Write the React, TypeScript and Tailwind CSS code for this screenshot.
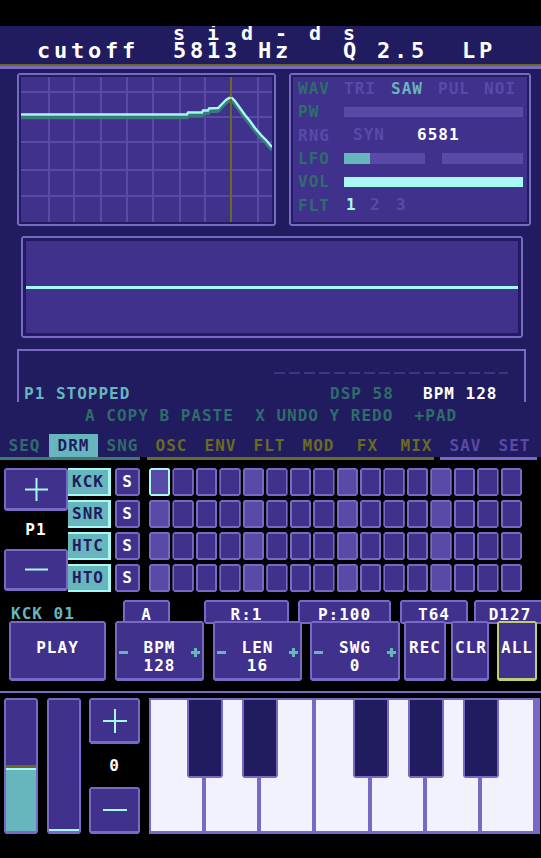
import React from "react";

const NOTCH =
  "[clip-path:polygon(2px_0,calc(100%-2px)_0,100%_2px,100%_calc(100%-2px),calc(100%-2px)_100%,2px_100%,0_calc(100%-2px),0_2px)]";

const SMALL = "text-[16px] tracking-[1px] leading-[16px] whitespace-pre";

function FilterGraph() {
  const vLines = [27, 52, 79, 105, 131, 158, 183, 236];
  const hLines = [14, 39, 64, 92, 118];
  const pts =
    "0,37.5 166,37.5 167,35.5 181,35.5 182,33.5 187,33.5 188,31.5 197,31 201,27 205,23 208,21 211,21 214,24 219,31 224,38 229,44 234,51 240,58 245,63 251,70";
  const shadow =
    "0,40.5 166,40.5 167,38.5 181,38.5 182,36.5 187,36.5 188,34.5 197,34 201,30 205,26 208,24 211,24 214,27 219,34 224,41 229,47 234,54 240,61 245,66 251,73";
  return (
    <svg width="251" height="145" viewBox="0 0 251 145" className="block">
      {vLines.map((x) => (
        <rect key={"v" + x} x={x} y={0} width={2} height={145} fill="#5a4aa8" />
      ))}
      {hLines.map((y) => (
        <rect key={"h" + y} x={0} y={y} width={251} height={2} fill="#5a4aa8" />
      ))}
      <polyline points={shadow} fill="none" stroke="#3a7a78" strokeWidth={3.6} strokeLinejoin="miter" />
      <polyline points={pts} fill="none" stroke="#a8f8f4" strokeWidth={2.4} strokeLinejoin="miter" />
      <rect x={209} y={0} width={2} height={145} fill="#6b6a23" />
      <rect x={209} y={20} width={2} height={2} fill="#c8d47a" />
    </svg>
  );
}

function Row({ children }: { children: React.ReactNode }) {
  return <div className="flex h-[23.3px] items-center">{children}</div>;
}

function Label({ children, dim }: { children: React.ReactNode; dim?: boolean }) {
  return (
    <span className={`w-[46px] leading-[23px] ${dim ? "text-[#5a4aa8]" : "text-[#2f6c6b]"}`}>
      {children}
    </span>
  );
}

function SynthPanel() {
  return (
    <div className={`${NOTCH} bg-[#7869c4] p-[2px] w-[242px] h-[153px]`}>
      <div className="bg-[#211b5f] p-[2px] h-full">
        <div className={`bg-[#40318d] h-full pl-[5px] pr-[4px] ${SMALL}`}>
          <Row>
            <Label>WAV</Label>
            <span className="w-[47px] text-[#5a4aa8]">TRI</span>
            <span className="w-[47px] text-[#67b6bd]">SAW</span>
            <span className="w-[46px] text-[#5a4aa8]">PUL</span>
            <span className="text-[#5a4aa8]">NOI</span>
          </Row>
          <Row>
            <Label>PW</Label>
            <div className="flex-1 h-[10px] bg-[#5a4aa8]" />
          </Row>
          <Row>
            <Label dim>RNG</Label>
            <span className="ml-[9px] w-[64px] text-[#5a4aa8]">SYN</span>
            <span className="text-white">6581</span>
          </Row>
          <Row>
            <Label>LFO</Label>
            <div className="w-[81px] h-[11px] bg-[#5a4aa8] flex">
              <div className="w-[26px] h-full bg-[#67b6bd]" />
            </div>
            <div className="ml-[17px] w-[81px] h-[11px] bg-[#5a4aa8]" />
          </Row>
          <Row>
            <Label>VOL</Label>
            <div className="flex-1 h-[10px] bg-[#a8f8f4]" />
          </Row>
          <Row>
            <Label>FLT</Label>
            <span className="pl-[2px] w-[26px] text-[#a8f8f4]">1</span>
            <span className="w-[26px] text-[#5a4aa8]">2</span>
            <span className="text-[#5a4aa8]">3</span>
          </Row>
        </div>
      </div>
    </div>
  );
}

function Cross({ size, minus }: { size: number; minus?: boolean }) {
  const c = size / 2;
  return (
    <svg width={size} height={size} viewBox={`0 0 ${size} ${size}`} className="block">
      <rect x={0} y={c - 1} width={size} height={2} fill="#a8f8f4" />
      {!minus && <rect x={c - 1} y={0} width={2} height={size} fill="#a8f8f4" />}
    </svg>
  );
}

function SmallSign({ minus }: { minus?: boolean }) {
  return (
    <svg width="9" height="9" viewBox="0 0 9 9" className="block">
      <rect x={0} y={3} width={9} height={3} fill="#67b6bd" />
      {!minus && <rect x={3} y={0} width={3} height={9} fill="#67b6bd" />}
    </svg>
  );
}

function PadButton({ h, minus, size }: { h: string; minus?: boolean; size: number }) {
  return (
    <div className={`${NOTCH} bg-[#7869c4] pt-[2px] px-[2px] pb-[3px] ${h}`}>
      <div className="bg-[#40318d] h-full flex items-center justify-center">
        <Cross size={size} minus={minus} />
      </div>
    </div>
  );
}

function Cell({ beat, cursor }: { beat: boolean; cursor: boolean }) {
  return (
    <div className={`${NOTCH} ${cursor ? "bg-[#a8f8f4]" : "bg-[#7869c4]"} p-[2px] h-[28px]`}>
      <div className={`h-full ${beat ? "bg-[#5a4aa8]" : "bg-[#40318d]"}`} />
    </div>
  );
}

function TrackLabel({ name }: { name: string }) {
  return (
    <div className="h-[28px] bg-[#67b6bd] border-t-2 border-b-2 border-r-[3px] border-[#a8f8f4] flex items-center justify-center text-[#211b5f]">
      {name}
    </div>
  );
}

function SoloButton() {
  return (
    <div className={`${NOTCH} bg-[#7869c4] p-[2px] h-[28px]`}>
      <div className="h-full bg-[#40318d] flex items-center justify-center text-white">S</div>
    </div>
  );
}

function TagBox({ w, ml, children }: { w: string; ml: string; children: React.ReactNode }) {
  return (
    <div className={`${NOTCH} bg-[#7869c4] p-[2px] h-[24px] shrink-0 ${w} ${ml}`}>
      <div className="h-full bg-[#40318d] flex justify-center pt-[5px] text-white">{children}</div>
    </div>
  );
}

function CtlButton({
  w,
  ml,
  label,
  value,
  accent,
}: {
  w: string;
  ml: string;
  label: string;
  value?: string;
  accent?: boolean;
}) {
  return (
    <div
      className={`${NOTCH} ${accent ? "bg-[#bfce72]" : "bg-[#7869c4]"} pt-[2px] px-[2px] pb-[3px] h-[60px] shrink-0 ${w} ${ml}`}
    >
      <div className="h-full bg-[#40318d] flex items-start px-[2px]">
        {value !== undefined && (
          <div className="mt-[25px]">
            <SmallSign minus />
          </div>
        )}
        <div className="flex-1 flex flex-col items-center pt-[16px] leading-[18px] text-white">
          <span>{label}</span>
          {value !== undefined && <span>{value}</span>}
        </div>
        {value !== undefined && (
          <div className="mt-[25px]">
            <SmallSign />
          </div>
        )}
      </div>
    </div>
  );
}

const TABS: { t: string; c: string }[] = [
  { t: "SEQ", c: "text-[#2f6c6b]" },
  { t: "DRM", c: "text-[#211b5f] bg-[#67b6bd]" },
  { t: "SNG", c: "text-[#2f6c6b]" },
  { t: "OSC", c: "text-[#6b6a23]" },
  { t: "ENV", c: "text-[#6b6a23]" },
  { t: "FLT", c: "text-[#6b6a23]" },
  { t: "MOD", c: "text-[#6b6a23]" },
  { t: "FX", c: "text-[#6b6a23]" },
  { t: "MIX", c: "text-[#6b6a23]" },
  { t: "SAV", c: "text-[#5a4aa8]" },
  { t: "SET", c: "text-[#5a4aa8]" },
];

const TRACKS = ["KCK", "SNR", "HTC", "HTO"];

function BlackKey({ pos }: { pos: string }) {
  return (
    <div className={`absolute top-0 ${pos} w-[36px] h-[80px] ${NOTCH} bg-[#7869c4] p-[2px]`}>
      <div className="h-full bg-[#211b5f]" />
    </div>
  );
}

export default function App() {
  return (
    <div className="w-[541px] h-[858px] overflow-hidden bg-black [font-family:'DejaVu_Sans_Mono',monospace] font-bold">
      {/* title bar */}
      <div className="h-[26px]" />
      <div className="h-[38px] bg-[#211b5f] overflow-hidden text-white text-center pr-[8px]">
        <div className="-mt-[1px] h-[16px] text-[20px] leading-[16px] tracking-[4.96px] whitespace-pre">s i d - d s</div>
        <div className="mt-[1px] text-[22px] leading-[18px] tracking-[3.76px] whitespace-pre">
          cutoff  5813 Hz   Q 2.5  LP
        </div>
      </div>
      <div className="h-[2px] bg-[#6b6a23]" />
      <div className="h-[3px] bg-[#7869c4]" />

      {/* synth area */}
      <div className={`bg-[#211b5f] pt-[4px] ${SMALL}`}>
        <div className="flex ml-[17px] gap-[13px]">
          <div className={`${NOTCH} bg-[#7869c4] p-[2px] w-[259px] h-[153px]`}>
            <div className="bg-[#211b5f] p-[2px] h-full">
              <div className="bg-[#40318d] h-full">
                <FilterGraph />
              </div>
            </div>
          </div>
          <SynthPanel />
        </div>

        <div className={`${NOTCH} mt-[10px] ml-[21px] w-[502px] h-[102px] bg-[#7869c4] p-[2px]`}>
          <div className="bg-[#211b5f] p-[3px] h-full">
            <div className="bg-[#40318d] h-full flex items-center">
              <div className="w-full h-[3px] bg-[#a8f8f4]" />
            </div>
          </div>
        </div>

        <div className="mt-[11px] ml-[17px] w-[509px] h-[53px] border-t-2 border-x-2 border-[#7869c4]">
          <div className="pt-[21px]">
            <div className="ml-[255px] w-[234px] h-[2px] bg-[repeating-linear-gradient(90deg,#40318d_0_11px,transparent_11px_15px)]" />
          </div>
          <div className="mt-[12px] pl-[5px] flex">
            <span className="w-[306px] text-[#67b6bd]">P1 STOPPED</span>
            <span className="w-[93px] text-[#2f6c6b]">DSP 58</span>
            <span className="text-white">BPM 128</span>
          </div>
        </div>

        <div className="mt-[6px] pl-[85px] text-[#2f6c6b]">A COPY B PASTE  X UNDO Y REDO  +PAD</div>

        <div className="mt-[10px] flex h-[23px] w-[539px]">
          {TABS.map((tab) => (
            <div key={tab.t} className={`w-[49px] h-[23px] leading-[23px] text-center ${tab.c}`}>
              {tab.t}
            </div>
          ))}
        </div>
      </div>
      <div className="flex h-[3px]">
        <div className="w-[140px] bg-[#3a7a7a]" />
        <div className="w-[7px]" />
        <div className="w-[287px] bg-[#6b6a23]" />
        <div className="w-[6px]" />
        <div className="w-[97px] bg-[#7869c4]" />
      </div>

      {/* drum sequencer */}
      <div className={`pt-[8px] flex ${SMALL}`}>
        <div className="ml-[4px] w-[64px] flex flex-col">
          <PadButton h="h-[43px]" size={23} />
          <div className="h-[38px] flex items-center justify-center text-white">P1</div>
          <PadButton h="h-[42px]" size={23} minus />
        </div>
        <div className="w-[43px] flex flex-col gap-[4px]">
          {TRACKS.map((t) => (
            <TrackLabel key={t} name={t} />
          ))}
        </div>
        <div className="ml-[4px] w-[25px] flex flex-col gap-[4px]">
          {TRACKS.map((t) => (
            <SoloButton key={t} />
          ))}
        </div>
        <div className="ml-[9px] w-[373px] grid grid-cols-[repeat(16,minmax(0,1fr))] gap-x-[2px] gap-y-[4px]">
          {TRACKS.map((t, r) =>
            Array.from({ length: 16 }).map((_, i) => (
              <Cell key={t + i} beat={i % 4 === 0} cursor={r === 0 && i === 0} />
            ))
          )}
        </div>
      </div>

      {/* transport controls */}
      <div className={`mt-[8px] ${SMALL}`}>
        <div className="flex h-[24px] items-start">
          <div className="w-[123px] shrink-0 pl-[11px] pt-[6px] text-[#67b6bd]">KCK 01</div>
          <TagBox w="w-[47px]" ml="ml-0">A</TagBox>
          <TagBox w="w-[85px]" ml="ml-[34px]">R:1</TagBox>
          <TagBox w="w-[93px]" ml="ml-[9px]">P:100</TagBox>
          <TagBox w="w-[68px]" ml="ml-[9px]">T64</TagBox>
          <TagBox w="w-[72px]" ml="ml-[6px]">D127</TagBox>
        </div>
        <div className="-mt-[3px] relative z-10 flex">
          <CtlButton w="w-[97px]" ml="ml-[9px]" label="PLAY" />
          <CtlButton w="w-[89px]" ml="ml-[9px]" label="BPM" value="128" />
          <CtlButton w="w-[89px]" ml="ml-[9px]" label="LEN" value="16" />
          <CtlButton w="w-[90px]" ml="ml-[8px]" label="SWG" value="0" />
          <CtlButton w="w-[42px]" ml="ml-[4px]" label="REC" />
          <CtlButton w="w-[38px]" ml="ml-[5px]" label="CLR" />
          <CtlButton w="w-[40px]" ml="ml-[8px]" label="ALL" accent />
        </div>
      </div>

      <div className="mt-[10px] h-[2px] bg-[#7869c4]" />

      {/* sliders, octave and keyboard */}
      <div className={`mt-[5px] flex h-[136px] ${SMALL}`}>
        <div className={`${NOTCH} ml-[4px] w-[34px] bg-[#7869c4] pt-[2px] px-[2px] pb-[3px] flex flex-col`}>
          <div className="flex-1 bg-[#40318d]" />
          <div className="h-[3px] bg-[#6b6a23]" />
          <div className="h-[2px] bg-[#a8f8f4]" />
          <div className="h-[61px] bg-[#67b6bd]" />
        </div>
        <div className={`${NOTCH} ml-[9px] w-[34px] bg-[#7869c4] pt-[2px] px-[2px] pb-[3px] flex flex-col`}>
          <div className="flex-1 bg-[#40318d]" />
          <div className="h-[2px] bg-[#a8f8f4]" />
        </div>
        <div className="ml-[8px] w-[51px] flex flex-col">
          <PadButton h="h-[46px]" size={24} />
          <div className="flex-1 flex items-center justify-center text-white">0</div>
          <PadButton h="h-[47px]" size={24} minus />
        </div>
        <div className="ml-[9px] w-[391px] relative bg-[#7869c4] pl-[2px] pt-[2px] pb-[3px] pr-[7px] flex gap-[4px]">
          {Array.from({ length: 7 }).map((_, i) => (
            <div key={i} className="flex-1 bg-[#f2f2fc]" />
          ))}
          <BlackKey pos="left-[38px]" />
          <BlackKey pos="left-[93px]" />
          <BlackKey pos="left-[204px]" />
          <BlackKey pos="left-[259px]" />
          <BlackKey pos="left-[314px]" />
        </div>
      </div>
    </div>
  );
}
